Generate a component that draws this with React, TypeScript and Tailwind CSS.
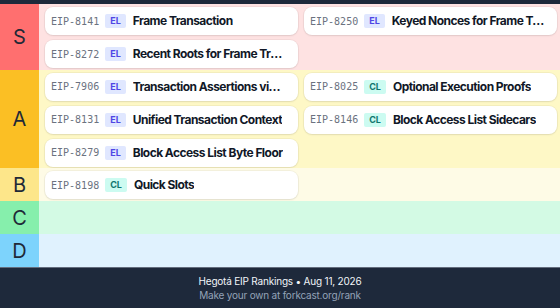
type Eip = { num: string; layer: 'EL' | 'CL'; title: string };

const TIERS: { label: string; labelBg: string; rowBg: string; items: Eip[] }[] = [
  {
    label: 'S',
    labelBg: 'bg-[#ff6f6f]',
    rowBg: 'bg-[#fee2e2]',
    items: [
      { num: '8141', layer: 'EL', title: 'Frame Transaction' },
      { num: '8250', layer: 'EL', title: 'Keyed Nonces for Frame Transactions' },
      { num: '8272', layer: 'EL', title: 'Recent Roots for Frame Transactions' },
    ],
  },
  {
    label: 'A',
    labelBg: 'bg-[#fbbf24]',
    rowBg: 'bg-[#fef8c6]',
    items: [
      { num: '7906', layer: 'EL', title: 'Transaction Assertions via Frames' },
      { num: '8025', layer: 'CL', title: 'Optional Execution Proofs' },
      { num: '8131', layer: 'EL', title: 'Unified Transaction Context' },
      { num: '8146', layer: 'CL', title: 'Block Access List Sidecars' },
      { num: '8279', layer: 'EL', title: 'Block Access List Byte Floor' },
    ],
  },
  {
    label: 'B',
    labelBg: 'bg-[#fde68a]',
    rowBg: 'bg-[#fefbe6]',
    items: [{ num: '8198', layer: 'CL', title: 'Quick Slots' }],
  },
  { label: 'C', labelBg: 'bg-[#86efac]', rowBg: 'bg-[#d3fae4]', items: [] },
  { label: 'D', labelBg: 'bg-[#7dd3fc]', rowBg: 'bg-[#e0f2fe]', items: [] },
];

function Card({ eip }: { eip: Eip }) {
  return (
    <div className="flex h-[28px] min-w-0 items-center gap-[6px] rounded-[8px] bg-white pl-[6px] pr-3 shadow-[0_1px_2px_rgba(0,0,0,0.08)] ring-1 ring-black/[0.04]">
      <span className="shrink-0 font-['DejaVu_Sans_Mono',monospace] text-[10px] text-[#6b7280]">EIP-{eip.num}</span>
      <span
        className={
          eip.layer === 'EL'
            ? 'flex h-[14px] shrink-0 items-center rounded-[2px] bg-[#e0e7ff] px-[5px] text-[9px] font-bold text-[#4f46e5]'
            : 'flex h-[14px] shrink-0 items-center rounded-[2px] bg-[#ccfbf1] px-[5px] text-[9px] font-bold text-[#0f766e]'
        }
      >
        {eip.layer}
      </span>
      <span className="ml-[1px] truncate text-[12px] font-bold tracking-[-0.55px] text-[#111827]">{eip.title}</span>
    </div>
  );
}

export default function App() {
  return (
    <div className="flex h-[308px] w-[560px] flex-col bg-[#1e293b] pt-1 font-['Inter',sans-serif]">
      {TIERS.map((t) => (
        <div key={t.label} className={`flex ${t.rowBg}`}>
          <div className={`flex w-[39px] shrink-0 items-center justify-center text-[20px] text-[#1f2937] ${t.labelBg}`}>
            {t.label}
          </div>
          <div className="grid min-h-[33px] min-w-0 flex-1 grid-cols-2 content-start gap-x-[6px] gap-y-[5px] pb-[1.5px] pl-[6px] pr-[3px] pt-[3px]">
            {t.items.map((e) => (
              <Card key={e.num} eip={e} />
            ))}
          </div>
        </div>
      ))}
      <div className="flex flex-1 flex-col items-center justify-center border-t border-[#cbd5e1]/40 leading-[14px] tracking-[-0.2px]">
        <p className="text-[10px] text-[#f1f5f9]">Hegotá EIP Rankings • Aug 11, 2026</p>
        <p className="text-[10px] text-[#94a3b8]">Make your own at forkcast.org/rank</p>
      </div>
    </div>
  );
}
